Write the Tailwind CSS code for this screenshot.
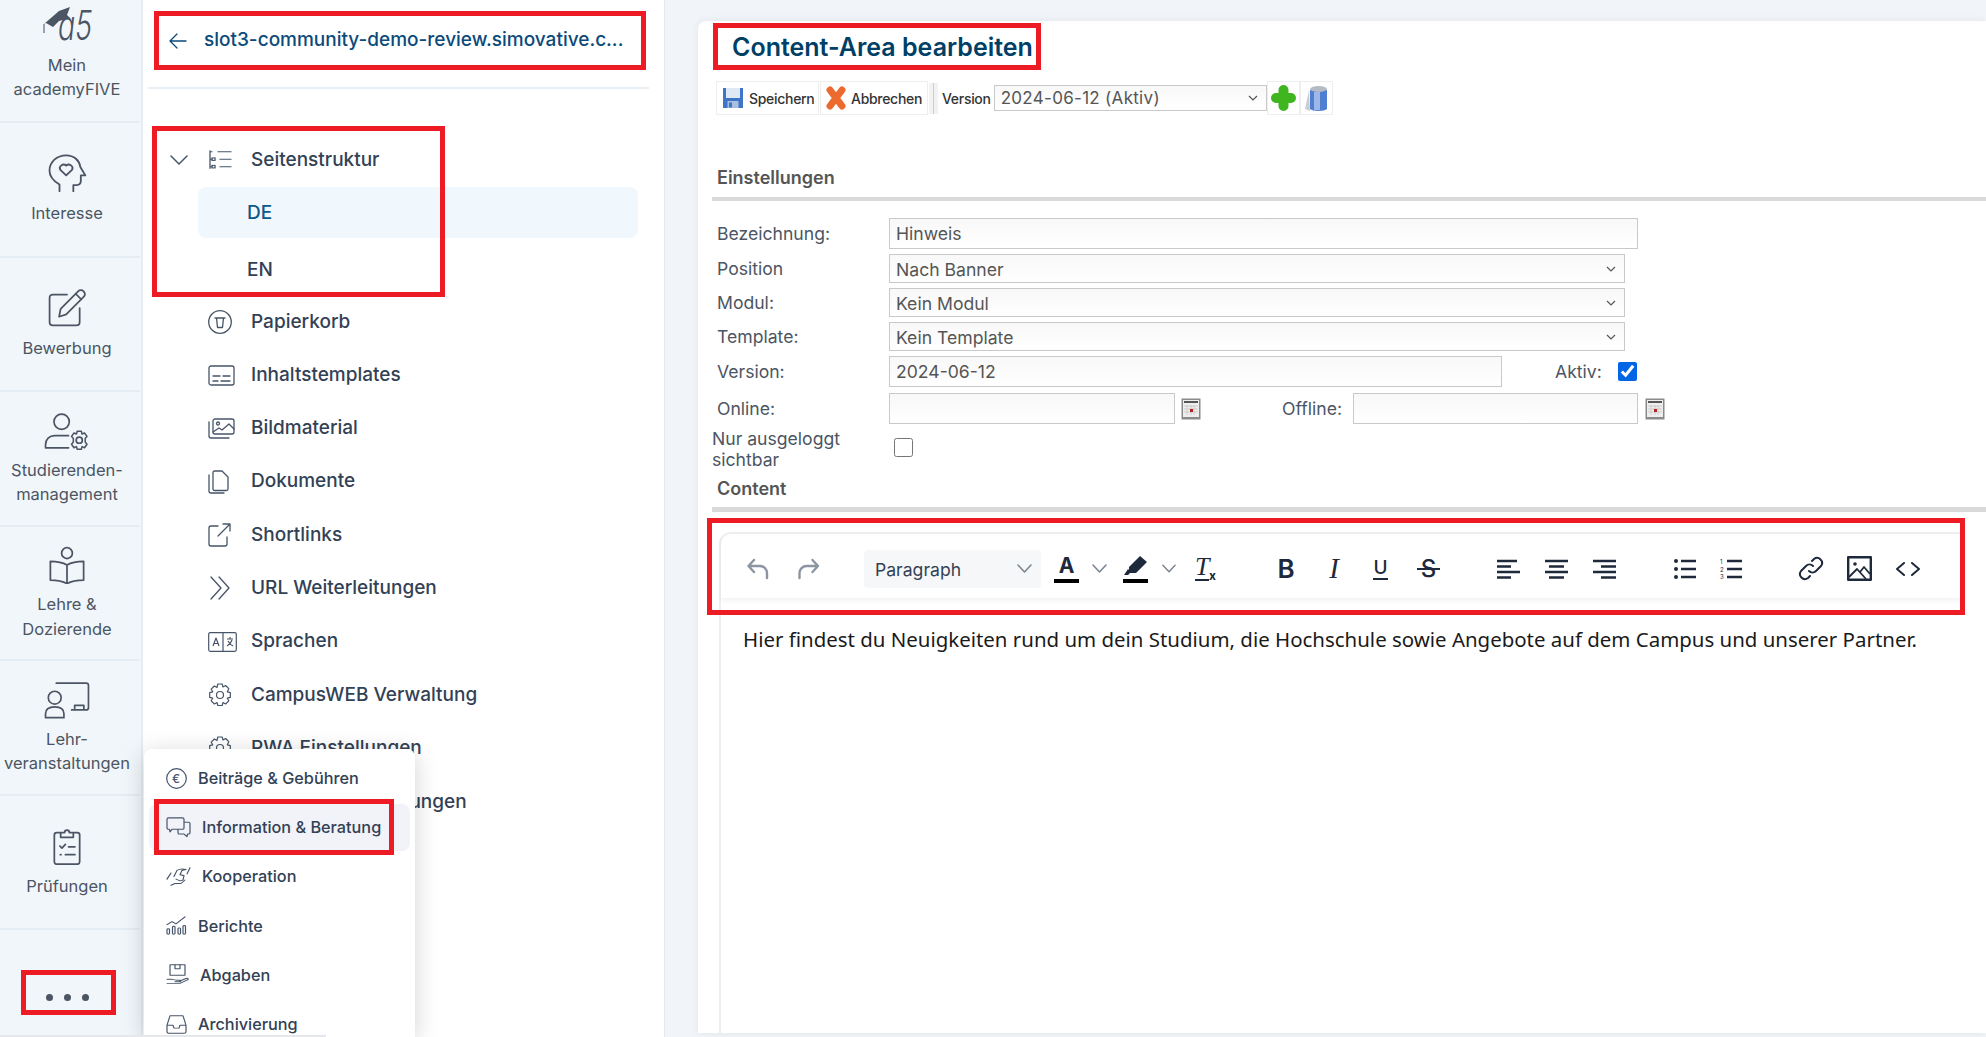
<!DOCTYPE html>
<html lang="de">
<head>
  <meta charset="UTF-8">
  <title>Content-Area bearbeiten</title>
  <script src="https://cdn.jsdelivr.net/npm/@tailwindcss/browser@4"></script>
</head>
<body class="relative flex h-[1037px] w-[1986px] overflow-hidden bg-[#f1f5f9] font-['Inter',sans-serif] text-[#4b5563]">

  <!-- main nav -->
  <aside class="w-[143px] shrink-0 border-r-2 border-[#e4edf3] bg-[#f1f6fa] pr-[1px] text-center text-[16.500px] leading-[24.500px]">
    <div class="-mt-[11.500px]">
      <a class="flex h-[134.500px] flex-col items-center justify-center border-b-2 border-[#e4edf3] pb-[4px] pr-[6px]">
        <svg class="h-[42px] w-[60px]" viewBox="0 0 60 42" fill="none">
          <path d="M7 20 L22 7 L33 3 L30 11 L33 14 L22 17 L16 23 L9 19 Z" fill="#4b5563"/>
          <path d="M7 20 V29" stroke="#9ca3af" stroke-width="2"/>
          <text x="21" y="36" textLength="34" lengthAdjust="spacingAndGlyphs" font-family="Inter" font-size="41" font-weight="300" font-style="italic" fill="#4b5563">a5</text>
        </svg>
        <span class="mt-[7px]">Mein<br>academyFIVE</span>
      </a>
      <a class="flex h-[134.500px] flex-col items-center justify-center border-b-2 border-[#e4edf3] pt-[1px] pr-[6px]">
        <svg class="h-[38px] w-[40px]" viewBox="0 0 24 24" fill="none" stroke="currentColor" stroke-width="1.100" stroke-linecap="round" stroke-linejoin="round" preserveAspectRatio="none"><path d="M7.500 23.500v-4.200C4 17 1.500 14 1.500 10.500 1.500 5 6 .8 11.500.8c4.800 0 8 3.400 8.500 7.400l3 5.300h-2.700v3.600c0 1.500-1 2.500-2.500 2.500h-2v3.900"/><path d="M11.500 13.500 8 10a2.200 2.200 0 0 1 3.500-2.600A2.200 2.200 0 0 1 15 10z"/></svg>
        <span class="mt-[9px]">Interesse</span>
      </a>
      <a class="flex h-[134.500px] flex-col items-center justify-center border-b-2 border-[#e4edf3] pt-[1px] pr-[6px]">
        <svg class="h-[38px] w-[38px]" viewBox="0 0 24 24" fill="none" stroke="currentColor" stroke-width="1.100" stroke-linecap="round" stroke-linejoin="round"><path d="M12 3.500H3a2 2 0 0 0-2 2V21a2 2 0 0 0 2 2h15a2 2 0 0 0 2-2v-9"/><path d="M7 17.500l1-5L19 1.500c1-1 2.600-1 3.500 0s1 2.500 0 3.500L11.500 16z"/><path d="M17.500 3l3.500 3.500"/></svg>
        <span class="mt-[9px]">Bewerbung</span>
      </a>
      <a class="flex h-[134.500px] flex-col items-center justify-center border-b-2 border-[#e4edf3] pt-[2px] pr-[6px]">
        <svg class="h-[38px] w-[46px]" viewBox="0 0 30 24" fill="none" stroke="currentColor" stroke-width="1.100" stroke-linecap="round" stroke-linejoin="round"><circle cx="11.500" cy="6" r="5"/><path d="M1 23v-2c0-3.500 2.500-6 6-6h9M1 23h15"/><circle cx="23" cy="18" r="2"/><path d="M21.500 11.200h3l.5 2 1.800-.8 1.800 2.500-1.300 1.600.0 2.500 1.300 1.600-1.800 2.500-1.800-.8-.5 2h-3l-.5-2-1.800.8-1.800-2.500 1.300-1.600 0-2.500-1.300-1.600 1.800-2.500 1.800.8z" transform="translate(2.300 2.100) scale(.9)"/></svg>
        <span class="mt-[8px]">Studierenden-<br>management</span>
      </a>
      <a class="flex h-[134.500px] flex-col items-center justify-center border-b-2 border-[#e4edf3] pt-[2px] pr-[6px]">
        <svg class="h-[38px] w-[38px]" viewBox="0 0 24 24" fill="none" stroke="currentColor" stroke-width="1.100" stroke-linecap="round" stroke-linejoin="round"><circle cx="12" cy="4.500" r="3.400"/><path d="M12 12c-2.500-1.500-6-2.300-10.500-2.300v11.800c4.500 0 8 .8 10.500 2.300 2.500-1.500 6-2.300 10.500-2.300V9.700C18 9.700 14.500 10.500 12 12zM12 12v11.500"/></svg>
        <span class="mt-[8px]">Lehre &amp;<br>Dozierende</span>
      </a>
      <a class="flex h-[134.500px] flex-col items-center justify-center border-b-2 border-[#e4edf3] pt-[2px] pr-[6px]">
        <svg class="h-[38px] w-[46px]" viewBox="0 0 30 24" fill="none" stroke="currentColor" stroke-width="1.100" stroke-linecap="round" stroke-linejoin="round"><path d="M8 1h19.500A1.500 1.500 0 0 1 29 2.500V17a1.500 1.500 0 0 1-1.500 1.500H18M20 18.500V15.500h6v3"/><circle cx="7" cy="10.500" r="4.200"/><path d="M1 23.500v-2.500c0-3 2.500-4.500 6-4.500s6 1.500 6 4.500v2.500z"/></svg>
        <span class="mt-[8px]">Lehr-<br>veranstaltungen</span>
      </a>
      <a class="flex h-[134.500px] flex-col items-center justify-center border-b-2 border-[#e4edf3] pt-[1px] pr-[6px]">
        <svg class="h-[38px] w-[38px]" viewBox="0 0 24 24" fill="none" stroke="currentColor" stroke-width="1.100" stroke-linecap="round" stroke-linejoin="round"><path d="M7.500 3.500H5.500A1.500 1.500 0 0 0 4 5v17a1.500 1.500 0 0 0 1.500 1.500h13A1.500 1.500 0 0 0 20 22V5a1.500 1.500 0 0 0-1.500-1.500h-2"/><path d="M8 6.500V3.500h2.500a1.500 1.500 0 0 1 3 0H16v3z"/><path d="M7.500 12l1.300 1.300 2.200-2.300M13 12.500h4M7.800 17.500h.4M11 17.500h6"/></svg>
        <span class="mt-[9px]">Prüfungen</span>
      </a>
    </div>
    <div class="flex justify-center gap-[11px] pr-[6px] pt-[64px]">
      <span class="size-[7px] rounded-full bg-[#4b5563]"></span>
      <span class="size-[7px] rounded-full bg-[#4b5563]"></span>
      <span class="size-[7px] rounded-full bg-[#4b5563]"></span>
    </div>
  </aside>

  <!-- sub nav -->
  <nav class="h-full w-[522px] shrink-0 border-r border-[#e5e7eb] bg-white text-[19px] font-medium text-[#334155]">
    <div class="ml-[5px] mr-[15px] flex h-[89px] items-center border-b-2 border-[#e8eff5] pb-[6px] pl-[20px]">
      <svg class="h-[20px] w-[20px]" viewBox="0 0 20 20" fill="none" stroke="#0b4a7a" stroke-width="1.300" stroke-linecap="round" stroke-linejoin="round"><path d="M18 10H2M9 3l-7 7 7 7"/></svg>
      <span class="ml-[16px] whitespace-nowrap text-[#0b4a7a]">slot3-community-demo-review.simovative.c...</span>
    </div>
    <div class="pt-[45px]">
      <div class="flex h-[52.300px] items-center pl-[27px]">
        <svg class="h-[18px] w-[18px]" viewBox="0 0 18 18" fill="none" stroke="#475569" stroke-width="1.500" stroke-linecap="round" stroke-linejoin="round"><path d="M1 5l8 8 8-8"/></svg>
        <svg class="ml-[20px] h-[20px] w-[24px]" viewBox="0 0 24 24" preserveAspectRatio="none" fill="none" stroke="#475569" stroke-width="1.300" stroke-linecap="round"><path d="M2 1v21M2 2h2M2 11h2M2 20h2"/><rect x="4" y="9.500" width="3" height="3"/><rect x="4" y="18.500" width="3" height="3"/><path d="M10 2h13M12 11h11M12 20h11"/></svg>
        <span class="ml-[19px]">Seitenstruktur</span>
      </div>
      <div class="my-[1.100px] ml-[55px] mr-[26px] flex h-[51px] items-center rounded-lg bg-[#f0f8fe] pl-[49px] text-[#0b5a86]">DE</div>
      <div class="flex h-[55.700px] items-center pl-[104px] pt-[5px]">EN</div>
      <div class="flex h-[53.300px] items-center pl-[65px]">
        <svg class="mr-[19px] h-[24px] w-[24px]" viewBox="0 0 24 24" fill="none" stroke="#475569" stroke-width="1.300" stroke-linecap="round" stroke-linejoin="round"><circle cx="12" cy="12" r="11.300"/><path d="M7 8h10M8.500 8l1 9.500h5l1-9.500"/></svg>
        <span>Papierkorb</span>
      </div>
      <div class="flex h-[53.300px] items-center pl-[65px]">
        <svg class="mr-[16px] h-[21px] w-[27px]" viewBox="0 0 27 21" fill="none" stroke="#475569" stroke-width="1.300" stroke-linecap="round"><rect x="1" y="1" width="25" height="19" rx="2"/><path d="M5 11h7M15 11h7M5 16h5M13 16h9"/></svg>
        <span>Inhaltstemplates</span>
      </div>
      <div class="flex h-[53.300px] items-center pl-[65px]">
        <svg class="mr-[16px] h-[21px] w-[27px]" viewBox="0 0 27 21" fill="none" stroke="#475569" stroke-width="1.300" stroke-linecap="round" stroke-linejoin="round"><rect x="5" y="1" width="21" height="15" rx="2"/><path d="M1 4v14a2 2 0 0 0 2 2h18"/><circle cx="10" cy="5.500" r="1.500"/><path d="M5 14l6-4 3 2 7-6 5 5"/></svg>
        <span>Bildmaterial</span>
      </div>
      <div class="flex h-[53.300px] items-center pl-[65px]">
        <svg class="mr-[22px] h-[24px] w-[21px]" viewBox="0 0 21 24" fill="none" stroke="#475569" stroke-width="1.300" stroke-linecap="round" stroke-linejoin="round"><path d="M5 2.500a1.500 1.500 0 0 1 1.500-1.500H14l6 6v12a1.500 1.500 0 0 1-1.500 1.500h-12A1.500 1.500 0 0 1 5 19z"/><path d="M1 5v16a2 2 0 0 0 2 2h13"/></svg>
        <span>Dokumente</span>
      </div>
      <div class="flex h-[53.300px] items-center pl-[65px]">
        <svg class="mr-[19px] h-[24px] w-[24px]" viewBox="0 0 24 24" fill="none" stroke="#475569" stroke-width="1.300" stroke-linecap="round" stroke-linejoin="round"><path d="M10 3H3a2 2 0 0 0-2 2v16a2 2 0 0 0 2 2h14a2 2 0 0 0 2-2v-7"/><path d="M10 13L22 1M15 1h7v7"/></svg>
        <span>Shortlinks</span>
      </div>
      <div class="flex h-[53.300px] items-center pl-[65px]">
        <svg class="mr-[19px] h-[24px] w-[24px]" viewBox="0 0 24 24" fill="none" stroke="#475569" stroke-width="1.300" stroke-linecap="round" stroke-linejoin="round"><path d="M3 1l10 11L3 23M11 1l10 11-10 11"/></svg>
        <span>URL Weiterleitungen</span>
      </div>
      <div class="flex h-[53.300px] items-center pl-[65px]">
        <svg class="mr-[14px] h-[20px] w-[29px]" viewBox="0 0 29 20" fill="none" stroke="#475569" stroke-width="1.200" stroke-linejoin="round"><rect x=".7" y=".7" width="27.600" height="18.600" rx="1.500"/><path d="M15 .7v18.600M5 14l3-8 3 8M6 11.500h4M19 7h6M22 5v2M24 8c-1 3-3 5-5 6M20 9c1 2 3 4 5 5"/></svg>
        <span>Sprachen</span>
      </div>
      <div class="flex h-[53.300px] items-center pl-[65px]">
        <svg class="mr-[19px] h-[24px] w-[24px]" viewBox="0 0 24 24" fill="none" stroke="#475569" stroke-width="1.200" stroke-linecap="round" stroke-linejoin="round"><circle cx="12" cy="12" r="3.500"/><path d="M9.800 1h4.400l.8 3 2.600-1.500 3.200 3.200L19.300 8.800l3 .8v4.800l-3 .8 1.500 2.600-3.200 3.200-2.600-1.500-.8 3H9.800l-.8-3-2.600 1.500-3.200-3.200 1.500-2.600-3-.8V9.600l3-.8L3.200 6.200l3.200-3.200L9 4.500z"/></svg>
        <span>CampusWEB Verwaltung</span>
      </div>
      <div class="flex h-[53.300px] items-center pl-[65px]">
        <svg class="mr-[19px] h-[24px] w-[24px]" viewBox="0 0 24 24" fill="none" stroke="#475569" stroke-width="1.200" stroke-linecap="round" stroke-linejoin="round"><circle cx="12" cy="12" r="3.500"/><path d="M9.800 1h4.400l.8 3 2.600-1.500 3.200 3.200L19.300 8.800l3 .8v4.800l-3 .8 1.500 2.600-3.200 3.200-2.600-1.500-.8 3H9.800l-.8-3-2.600 1.500-3.200-3.200 1.500-2.600-3-.8V9.600l3-.8L3.200 6.200l3.200-3.200L9 4.500z"/></svg>
        <span>PWA Einstellungen</span>
      </div>
      <div class="flex h-[53.300px] items-center pl-[95px] pt-[2px]">Allgemeine Einstellungen</div>
    </div>
  </nav>

  <!-- content card -->
  <main class="ml-[33px] mt-[21px] flex h-[1012px] flex-1 flex-col rounded-tl-lg bg-white pl-[14px] text-[17.600px] shadow-[0_0_8px_rgba(0,0,0,.07)]">
    <h1 class="pl-[20px] pt-[10px] text-[25px] leading-[32px] font-semibold text-[#003f66]">Content-Area bearbeiten</h1>

    <div class="ml-[4px] mt-[18px] flex h-[34px] items-center text-[14px] tracking-[-.3px] text-[#333]">
      <button class="flex h-[34px] w-[103px] items-center border border-[#eee] pl-[5px] font-medium">
        <svg class="h-[22px] w-[22px]" viewBox="0 0 22 22"><path d="M1 1h20v20H1z" fill="#3f74c9"/><rect x="4" y="1" width="14" height="10" fill="#dfe8f5"/><rect x="5.500" y="14" width="11" height="7" fill="#a9bfdf"/><rect x="7" y="15.500" width="3" height="5" fill="#3f74c9"/></svg>
        <span class="ml-[5px]">Speichern</span>
      </button>
      <button class="ml-[1px] flex h-[34px] w-[108px] items-center border border-[#eee] pl-[4px] font-medium">
        <svg class="h-[24px] w-[22px]" viewBox="0 0 22 24" fill="none" stroke="#ed6a2f" stroke-width="7" stroke-linecap="round"><path d="M5 4l12 16M17 4L5 20"/></svg>
        <span class="ml-[4px]">Abbrechen</span>
      </button>
      <div class="ml-[1px] flex h-[31px] w-[9px] justify-center bg-[#f2f2f2]"><span class="h-full w-[1px] bg-[#ccc]"></span></div>
      <span class="ml-[4px] font-medium">Version</span>
      <div class="relative ml-[3px]">
        <select class="block h-[26px] w-[273px] appearance-none border border-[#c9c9c9] bg-linear-to-b from-[#f8f8f8] to-white pl-[6px] text-[17px] tracking-[.3px] text-[#555]"><option>2024-06-12 (Aktiv)</option></select>
        <svg class="absolute right-[9px] top-[10px] h-[6px] w-[10px]" viewBox="0 0 10 6" fill="none" stroke="#555" stroke-width="1.200"><path d="M1 1l4 4 4-4"/></svg>
      </div>
      <button class="flex h-[34px] w-[33px] items-center justify-center border border-[#eee]">
        <svg class="h-[28px] w-[27px]" viewBox="0 0 27 28" fill="none" stroke="#3fb51f" stroke-width="10" stroke-linecap="round"><path d="M13.500 6v16M6 14h15"/></svg>
      </button>
      <button class="flex h-[34px] w-[33px] items-center justify-center border border-[#eee]">
        <svg class="h-[28px] w-[27px]" viewBox="0 0 27 28"><path d="M6 6L2 25l5 2z" fill="#c9ced6"/><path d="M7 6h17v19c-2 2.500-15 2.500-17 0z" fill="#4f7fd1"/><path d="M11 8v18h6V8z" fill="#9db8e8"/><ellipse cx="15.500" cy="5" rx="8.500" ry="3" fill="#b5bbc4"/></svg>
      </button>
    </div>

    <h2 class="mt-[51px] border-b-4 border-[#d9d9d9] pb-[7px] pl-[5px] text-[18px] leading-[24px] font-semibold text-[#555]">Einstellungen</h2>

    <div class="mt-[17px] flex h-[31px] items-center">
      <label class="w-[177px] pl-[5px] pt-[1px]">Bezeichnung:</label>
      <input class="h-[31px] w-[749px] border border-[#c9c9c9] bg-linear-to-b from-[#f8f8f8] to-white pl-[6px] text-[#555]" value="Hinweis">
    </div>
    <div class="mt-[5px] flex h-[29px] items-center">
      <label class="w-[177px] pl-[5px] pt-[1px]">Position</label>
      <div class="relative">
        <select class="block h-[29px] w-[736px] appearance-none border border-[#c9c9c9] bg-linear-to-b from-[#f8f8f8] to-white pl-[6px] pt-[2px] text-[#555]"><option>Nach Banner</option></select>
        <svg class="absolute right-[9px] top-[12px] h-[6px] w-[10px]" viewBox="0 0 10 6" fill="none" stroke="#555" stroke-width="1.200"><path d="M1 1l4 4 4-4"/></svg>
      </div>
    </div>
    <div class="mt-[5px] flex h-[29px] items-center">
      <label class="w-[177px] pl-[5px] pt-[1px]">Modul:</label>
      <div class="relative">
        <select class="block h-[29px] w-[736px] appearance-none border border-[#c9c9c9] bg-linear-to-b from-[#f8f8f8] to-white pl-[6px] pt-[2px] text-[#555]"><option>Kein Modul</option></select>
        <svg class="absolute right-[9px] top-[12px] h-[6px] w-[10px]" viewBox="0 0 10 6" fill="none" stroke="#555" stroke-width="1.200"><path d="M1 1l4 4 4-4"/></svg>
      </div>
    </div>
    <div class="mt-[5px] flex h-[29px] items-center">
      <label class="w-[177px] pl-[5px] pt-[1px]">Template:</label>
      <div class="relative">
        <select class="block h-[29px] w-[736px] appearance-none border border-[#c9c9c9] bg-linear-to-b from-[#f8f8f8] to-white pl-[6px] pt-[2px] text-[#555]"><option>Kein Template</option></select>
        <svg class="absolute right-[9px] top-[12px] h-[6px] w-[10px]" viewBox="0 0 10 6" fill="none" stroke="#555" stroke-width="1.200"><path d="M1 1l4 4 4-4"/></svg>
      </div>
    </div>
    <div class="mt-[5px] flex h-[31px] items-center">
      <label class="w-[177px] pl-[5px] pt-[1px]">Version:</label>
      <input class="h-[31px] w-[613px] border border-[#c9c9c9] bg-linear-to-b from-[#f8f8f8] to-white pl-[6px] text-[#555]" value="2024-06-12">
      <label class="ml-[53px] pt-[1px]">Aktiv:</label>
      <input type="checkbox" checked class="ml-[16px] size-[19px] accent-[#0066e6]">
    </div>
    <div class="mt-[6px] flex h-[31px] items-center">
      <label class="w-[177px] pl-[5px] pt-[1px]">Online:</label>
      <input class="h-[31px] w-[286px] border border-[#c9c9c9] bg-linear-to-b from-[#f8f8f8] to-white">
      <svg class="ml-[6px] h-[22px] w-[20px]" viewBox="0 0 20 22"><rect x=".5" y=".5" width="19" height="21" fill="#8a8a8a"/><rect x="2" y="2" width="16" height="17" fill="#eee"/><rect x="3" y="3" width="14" height="2" fill="#555"/><path d="M3 8h14M3 11h14M3 14h14M6 7v10M10 7v10M13 7v10" stroke="#ccc"/><rect x="9" y="11" width="3" height="3" fill="#b52020"/></svg>
      <label class="ml-[81px] pt-[1px]">Offline:</label>
      <input class="ml-[11px] h-[31px] w-[285px] border border-[#c9c9c9] bg-linear-to-b from-[#f8f8f8] to-white">
      <svg class="ml-[7px] h-[22px] w-[20px]" viewBox="0 0 20 22"><rect x=".5" y=".5" width="19" height="21" fill="#8a8a8a"/><rect x="2" y="2" width="16" height="17" fill="#eee"/><rect x="3" y="3" width="14" height="2" fill="#555"/><path d="M3 8h14M3 11h14M3 14h14M6 7v10M10 7v10M13 7v10" stroke="#ccc"/><rect x="9" y="11" width="3" height="3" fill="#b52020"/></svg>
    </div>
    <div class="mt-[4px] flex items-start leading-[21px]">
      <label class="w-[182px]">Nur ausgeloggt<br>sichtbar</label>
      <input type="checkbox" class="mt-[10px] size-[19px]">
    </div>

    <h2 class="mt-[7px] border-b-[5px] border-[#d9d9d9] pb-[6px] pl-[5px] text-[18px] leading-[24px] font-semibold text-[#555]">Content</h2>

    <!-- editor -->
    <div class="ml-[7px] mr-[24px] mt-[20px] flex-1 rounded-tl-xl border-l-2 border-t-2 border-[#eee]">
      <div class="flex h-[64px] items-center pt-[5px] text-[#1e293b] shadow-[0_3px_5px_rgba(0,0,0,.05)]">
        <svg class="ml-[26px] h-[22px] w-[22px]" viewBox="0 0 22 22" fill="none" stroke="#8b95a1" stroke-width="2.400" stroke-linecap="round" stroke-linejoin="round"><path d="M7 2L1.500 8 7 14M2 8h11a7 7 0 0 1 7 7v5"/></svg>
        <svg class="ml-[28px] h-[22px] w-[23px]" viewBox="0 0 22 22" fill="none" stroke="#8b95a1" stroke-width="2.400" stroke-linecap="round" stroke-linejoin="round"><path d="M15 2l5.500 6L15 14M20 8H9a7 7 0 0 0-7 7v5"/></svg>
        <div class="ml-[44px] flex h-[38px] w-[177px] items-center rounded bg-[#f6f7f8] pl-[11px] text-[17.600px] text-[#334155]">
          <span class="flex-1 pt-[3px]">Paragraph</span>
          <svg class="mr-[9px] h-[15px] w-[15px]" viewBox="0 0 15 15" fill="none" stroke="#7b8794" stroke-width="1.600" stroke-linecap="round" stroke-linejoin="round"><path d="M1 4l6.500 7L14 4"/></svg>
        </div>
        <div class="ml-[13px] flex w-[25px] flex-col items-center">
          <span class="text-[21px] leading-[24px] font-bold text-[#1e293b]">A</span>
          <span class="mt-[1px] h-[4px] w-[25px] bg-black"></span>
        </div>
        <svg class="ml-[13px] h-[15px] w-[15px]" viewBox="0 0 15 15" fill="none" stroke="#7b8794" stroke-width="1.600" stroke-linecap="round" stroke-linejoin="round"><path d="M1 4l6.500 7L14 4"/></svg>
        <div class="ml-[16px] flex w-[25px] flex-col items-center">
          <svg class="h-[23px] w-[25px]" viewBox="0 0 25 23"><path d="M1 21l4-6 3 3-3 3z M6 13L17 2l7 6-11 11-7 0z" fill="#1e293b"/></svg>
          <span class="mt-[2px] h-[4px] w-[25px] bg-black"></span>
        </div>
        <svg class="ml-[14px] h-[15px] w-[14px]" viewBox="0 0 15 15" fill="none" stroke="#7b8794" stroke-width="1.600" stroke-linecap="round" stroke-linejoin="round"><path d="M1 4l6.500 7L14 4"/></svg>
        <div class="relative ml-[19px] h-[28px] w-[21px] font-['Liberation_Serif',serif] text-[26px] leading-[23px] italic">
          <span class="absolute left-0 top-0 border-b-2 border-[#1e293b] pb-[1px]">T</span>
          <span class="absolute bottom-[1px] right-0 font-['Inter',sans-serif] text-[12px] leading-[12px] font-bold not-italic">x</span>
        </div>
        <span class="ml-[61px] w-[18px] text-center text-[26px] font-semibold">B</span>
        <span class="ml-[33px] w-[12px] text-center font-['Liberation_Serif',serif] text-[29px] italic">I</span>
        <span class="ml-[33px] w-[15px] border-b-2 border-[#1e293b] text-center text-[19px] leading-[21px] font-medium">U</span>
        <span class="relative ml-[29px] w-[23px] text-center text-[24px] font-medium">S<span class="absolute left-0 top-[17px] h-[2px] w-[23px] bg-[#1e293b]"></span></span>
        <svg class="ml-[57px] h-[20px] w-[23px]" viewBox="0 0 23 20" fill="none" stroke="#1e293b" stroke-width="2.400"><path d="M0 2h20M0 7.500h14M0 13h23M0 18.500h14"/></svg>
        <svg class="ml-[25px] h-[20px] w-[23px]" viewBox="0 0 23 20" fill="none" stroke="#1e293b" stroke-width="2.400"><path d="M0 2h23M4 7.500h15M0 13h23M4 18.500h15"/></svg>
        <svg class="ml-[25px] h-[20px] w-[23px]" viewBox="0 0 23 20" fill="none" stroke="#1e293b" stroke-width="2.400"><path d="M0 2h23M8 7.500h15M0 13h23M8 18.500h15"/></svg>
        <svg class="ml-[58px] h-[20px] w-[22px]" viewBox="0 0 22 20" fill="#1e293b" stroke="#1e293b" stroke-width="2.400"><path d="M7 2h15M7 10h15M7 18h15"/><g stroke="none"><circle cx="2" cy="2" r="2"/><circle cx="2" cy="10" r="2"/><circle cx="2" cy="18" r="2"/></g></svg>
        <svg class="ml-[24px] h-[20px] w-[22px]" viewBox="0 0 22 20" fill="#1e293b" stroke="#1e293b" stroke-width="2.400"><path d="M7 2h15M7 10h15M7 18h15"/><g stroke="none" font-family="Inter" font-size="6"><text x="0" y="5">1</text><text x="0" y="12.500">2</text><text x="0" y="19.500">3</text></g></svg>
        <svg class="ml-[56px] h-[26px] w-[26px]" viewBox="0 0 26 26" fill="none" stroke="#1e293b" stroke-width="2" stroke-linecap="round" stroke-linejoin="round"><path d="M11 15a5 5 0 0 0 7 0l5-5a5 5 0 0 0-7-7l-2 2"/><path d="M15 10a5 5 0 0 0-7 0l-5 5a5 5 0 0 0 7 7l2-2"/></svg>
        <svg class="ml-[23px] h-[25px] w-[25px]" viewBox="0 0 25 25" fill="none" stroke="#1e293b" stroke-width="2.400" stroke-linejoin="round"><rect x="1.200" y="1.200" width="22.600" height="22.600"/><circle cx="8" cy="8" r="1.800" fill="#1e293b" stroke="none"/><path d="M2 21l8-8 9 10M13 16l4-5 6 7" stroke-width="1.800"/></svg>
        <svg class="ml-[24px] h-[14px] w-[24px]" viewBox="0 0 24 14" fill="none" stroke="#1e293b" stroke-width="2" stroke-linecap="round" stroke-linejoin="round"><path d="M8 1L1 7l7 6M16 1l7 6-7 6"/></svg>
      </div>
      <p class="ml-[22px] mt-[27px] font-['Noto_Sans',sans-serif] text-[20.450px] leading-[28px] text-[#1a1a1a]">Hier findest du Neuigkeiten rund um dein Studium, die Hochschule sowie Angebote auf dem Campus und unserer Partner.</p>
    </div>
  </main>

  <!-- overflow menu, over the sub nav -->
  <div class="absolute bottom-0 left-[144px] top-[749px] w-[271px] overflow-hidden rounded-t-lg bg-white pt-[5.700px] text-[16.250px] font-medium text-[#334155] shadow-[0_4px_24px_rgba(0,0,0,.18)]">
    <div class="mx-[5px] mb-[2.200px] flex h-[47px] items-center pl-[17px]">
      <svg class="mr-[11px] h-[21px] w-[21px]" viewBox="0 0 21 21" fill="none" stroke="#475569" stroke-width="1.200"><circle cx="10.500" cy="10.500" r="9.800"/><text x="6" y="15" font-family="Inter" font-size="12" fill="#475569" stroke="none">€</text></svg>
      <span>Beiträge &amp; Gebühren</span>
    </div>
    <div class="mx-[5px] mb-[2.200px] flex h-[47px] items-center rounded-lg bg-[#f1f3f9] pl-[17px]">
      <svg class="mr-[11px] h-[21px] w-[25px]" viewBox="0 0 25 24" preserveAspectRatio="none" fill="none" stroke="#475569" stroke-width="1.200" stroke-linejoin="round"><path d="M2.500 1h14A1.500 1.500 0 0 1 18 2.500v10a1.500 1.500 0 0 1-1.500 1.500H6l-2 3-.5-3h-1A1.500 1.500 0 0 1 1 12.500v-10A1.500 1.500 0 0 1 2.500 1z"/><path d="M18 6h4.500A1.500 1.500 0 0 1 24 7.500V18a1.500 1.500 0 0 1-1.500 1.500h-1l-.5 3-3-3h-4.500A1.500 1.500 0 0 1 12 18v-4"/></svg>
      <span>Information &amp; Beratung</span>
    </div>
    <div class="mx-[5px] mb-[2.200px] flex h-[47px] items-center pl-[17px]">
      <svg class="mr-[11px] h-[21px] w-[25px]" viewBox="0 0 25 24" preserveAspectRatio="none" fill="none" stroke="#475569" stroke-width="1.200" stroke-linecap="round" stroke-linejoin="round"><path d="M1 15L5 8M24 2l-3 7M8 12l3-7c3-2 6-2 9-1l-4 1-2 5 4 1-1 5-3 1-4-2M5 22l4-2h6l4-4"/></svg>
      <span>Kooperation</span>
    </div>
    <div class="mx-[5px] mb-[2.200px] flex h-[47px] items-center pl-[17px]">
      <svg class="mr-[11px] h-[19px] w-[21px]" viewBox="0 0 21 24" preserveAspectRatio="none" fill="none" stroke="#475569" stroke-width="1.200" stroke-linecap="round"><path d="M1 11l5-4 4 3 9-9"/><rect x="1" y="16" width="2.500" height="7" rx="1.200"/><rect x="6.500" y="13" width="2.500" height="10" rx="1.200"/><rect x="12" y="15" width="2.500" height="8" rx="1.200"/><rect x="17" y="12" width="2.500" height="11" rx="1.200"/></svg>
      <span>Berichte</span>
    </div>
    <div class="mx-[5px] mb-[2.200px] flex h-[47px] items-center pl-[17px]">
      <svg class="mr-[11px] h-[21px] w-[23px]" viewBox="0 0 23 26" preserveAspectRatio="none" fill="none" stroke="#475569" stroke-width="1.200" stroke-linecap="round" stroke-linejoin="round"><rect x="4" y="1" width="15" height="13"/><path d="M9 1v5h5V1M1 19h5l4 1h4c1 0 1 2 0 2H9M14 21l6-3c2-1 3 1 1 2l-7 4H1"/></svg>
      <span>Abgaben</span>
    </div>
    <div class="mx-[5px] flex h-[47px] items-center pl-[17px]">
      <svg class="mr-[11px] h-[19px] w-[21px]" viewBox="0 0 21 26" preserveAspectRatio="none" fill="none" stroke="#475569" stroke-width="1.200" stroke-linejoin="round"><path d="M4 1h13l3 13v9a2 2 0 0 1-2 2H3a2 2 0 0 1-2-2v-9z"/><path d="M1 14h6l1 4h5l1-4h6"/></svg>
      <span>Archivierung</span>
    </div>
  </div>
  <div class="absolute bottom-0 left-0 h-[2px] w-[326px] bg-[#e5e7eb]"></div>

  <!-- red highlight boxes from the screenshot -->
  <div class="pointer-events-none absolute left-[154px] top-[11px] h-[59px] w-[492px] border-[5px] border-[#ed1c24]"></div>
  <div class="pointer-events-none absolute left-[152px] top-[126px] h-[171px] w-[293px] border-[5px] border-[#ed1c24]"></div>
  <div class="pointer-events-none absolute left-[154px] top-[799px] h-[56px] w-[240px] border-[5px] border-[#ed1c24]"></div>
  <div class="pointer-events-none absolute left-[21px] top-[970px] h-[45px] w-[95px] border-[5px] border-[#ed1c24]"></div>
  <div class="pointer-events-none absolute left-[713px] top-[23px] h-[47px] w-[328px] border-[5px] border-[#ed1c24]"></div>
  <div class="pointer-events-none absolute left-[707px] top-[518px] h-[97px] w-[1258px] border-[5px] border-[#ed1c24]"></div>
</body>
</html>
